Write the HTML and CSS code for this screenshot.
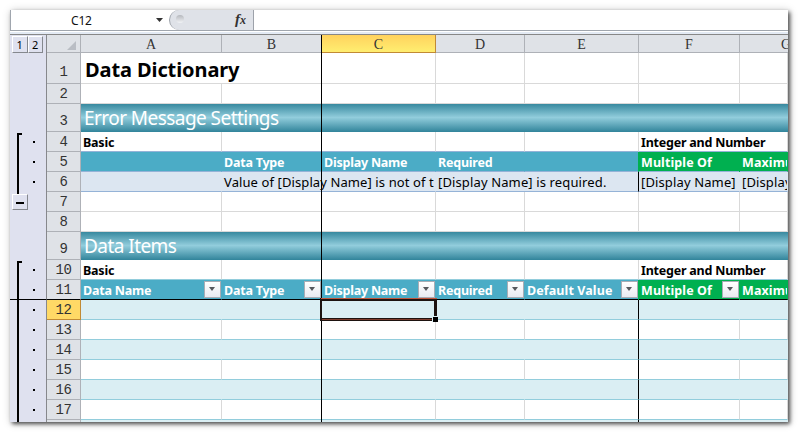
FILE: index.html
```html
<!DOCTYPE html>
<html lang="en">
<head>
<meta charset="utf-8">
<title>Data Dictionary</title>
<link rel="stylesheet" href="styles.css">
</head>
<body>
<main class="window">
  <div class="formula-bar">
    <div class="name-box"><span>C12</span>
      <svg width="7" height="4" viewBox="0 0 7 4"><path d="M0 0h7L3.5 4z" fill="#333"/></svg>
    </div>
    <div class="fx"><i class="knob"></i><span>f<small>x</small></span></div>
    <div class="formula"></div>
  </div>
  <div class="bar-gap"></div>
  <div class="sheet">
    <div class="row head">
      <div class="outline levels"><b>1</b><b>2</b></div>
      <div class="corner"><svg width="9" height="9" viewBox="0 0 9 9"><path d="M9 0v9H0z" fill="#b9bdc4"/></svg></div>
      <div>A</div><div>B</div><div class="active">C</div><div>D</div><div>E</div><div>F</div><div class="partial">G</div>
    </div>
    <div class="row tall">
      <div class="outline"></div><div class="num">1</div>
      <div class="cell span2 title">Data Dictionary</div><div class="cell"></div><div class="cell"></div><div class="cell"></div><div class="cell"></div><div class="cell"></div>
    </div>
    <div class="row">
      <div class="outline"></div><div class="num">2</div>
      <div class="cell"></div><div class="cell"></div><div class="cell"></div><div class="cell"></div><div class="cell"></div><div class="cell"></div><div class="cell"></div>
    </div>
    <div class="row band-row">
      <div class="outline"></div><div class="num">3</div><div class="band">Error Message Settings</div>
    </div>
    <div class="row strong blue-line">
      <div class="outline"><i class="bracket start"></i><i class="dot"></i></div><div class="num">4</div>
      <div class="cell">Basic</div><div class="cell"></div><div class="cell"></div><div class="cell"></div><div class="cell"></div><div class="cell span2">Integer and Number</div>
    </div>
    <div class="row strong fields blue-line">
      <div class="outline"><i class="bracket"></i><i class="dot"></i></div><div class="num">5</div>
      <div class="cell"></div><div class="cell">Data Type</div><div class="cell">Display Name</div><div class="cell">Required</div><div class="cell"></div><div class="cell green">Multiple Of</div><div class="cell green">Maximum</div>
    </div>
    <div class="row messages blue-line">
      <div class="outline"><i class="bracket"></i><i class="dot"></i></div><div class="num">6</div>
      <div class="cell"></div><div class="cell span2 tight">Value of [Display Name] is not of t</div><div class="cell span2 edge">[Display Name] is required.</div><div class="cell">[Display Name]</div><div class="cell">[Display Name]</div>
    </div>
    <div class="row">
      <div class="outline"><i class="bracket end"></i><i class="collapse"></i></div><div class="num">7</div>
      <div class="cell"></div><div class="cell"></div><div class="cell"></div><div class="cell"></div><div class="cell"></div><div class="cell"></div><div class="cell"></div>
    </div>
    <div class="row">
      <div class="outline"></div><div class="num">8</div>
      <div class="cell"></div><div class="cell"></div><div class="cell"></div><div class="cell"></div><div class="cell"></div><div class="cell"></div><div class="cell"></div>
    </div>
    <div class="row band-row">
      <div class="outline"></div><div class="num">9</div><div class="band">Data Items</div>
    </div>
    <div class="row strong aqua-line">
      <div class="outline"><i class="bracket start"></i><i class="dot"></i></div><div class="num">10</div>
      <div class="cell">Basic</div><div class="cell"></div><div class="cell"></div><div class="cell"></div><div class="cell"></div><div class="cell span2">Integer and Number</div>
    </div>
    <div class="row strong fields frozen">
      <div class="outline"><i class="bracket"></i><i class="dot"></i></div><div class="num">11</div>
      <div class="cell">Data Name<i class="filter"></i></div><div class="cell">Data Type<i class="filter"></i></div><div class="cell">Display Name<i class="filter"></i></div><div class="cell">Required<i class="filter"></i></div><div class="cell loose">Default Value<i class="filter"></i></div><div class="cell green">Multiple Of<i class="filter"></i></div><div class="cell green">Maximum</div>
    </div>
    <div class="row data shade aqua-line">
      <div class="outline"><i class="bracket"></i><i class="dot"></i></div><div class="num active">12</div>
      <div class="cell"></div><div class="cell"></div><div class="cell"></div><div class="cell"></div><div class="cell edge"></div><div class="cell"></div><div class="cell"></div>
    </div>
    <div class="row data aqua-line">
      <div class="outline"><i class="bracket"></i><i class="dot"></i></div><div class="num">13</div>
      <div class="cell"></div><div class="cell"></div><div class="cell"></div><div class="cell"></div><div class="cell edge"></div><div class="cell"></div><div class="cell"></div>
    </div>
    <div class="row data shade aqua-line">
      <div class="outline"><i class="bracket"></i><i class="dot"></i></div><div class="num">14</div>
      <div class="cell"></div><div class="cell"></div><div class="cell"></div><div class="cell"></div><div class="cell edge"></div><div class="cell"></div><div class="cell"></div>
    </div>
    <div class="row data aqua-line">
      <div class="outline"><i class="bracket"></i><i class="dot"></i></div><div class="num">15</div>
      <div class="cell"></div><div class="cell"></div><div class="cell"></div><div class="cell"></div><div class="cell edge"></div><div class="cell"></div><div class="cell"></div>
    </div>
    <div class="row data shade aqua-line">
      <div class="outline"><i class="bracket"></i><i class="dot"></i></div><div class="num">16</div>
      <div class="cell"></div><div class="cell"></div><div class="cell"></div><div class="cell"></div><div class="cell edge"></div><div class="cell"></div><div class="cell"></div>
    </div>
    <div class="row data aqua-line">
      <div class="outline"><i class="bracket"></i><i class="dot"></i></div><div class="num">17</div>
      <div class="cell"></div><div class="cell"></div><div class="cell"></div><div class="cell"></div><div class="cell edge"></div><div class="cell"></div><div class="cell"></div>
    </div>
    <div class="row data shade">
      <div class="outline"><i class="bracket"></i></div><div class="num"></div>
      <div class="cell"></div><div class="cell"></div><div class="cell"></div><div class="cell"></div><div class="cell edge"></div><div class="cell"></div><div class="cell"></div>
    </div>
    <i class="freeze-line"></i>
    <div class="selection"><i class="handle"></i></div>
  </div>
</main>
</body>
</html>
```
FILE: styles.css
```css
* { box-sizing: border-box; }
body {
  margin: 0;
  padding: 10px;
  background: #fff;
  overflow: hidden;
  font-family: "Noto Sans", sans-serif;
}
.window {
  width: 778px;
  height: 412px;
  display: flex;
  flex-direction: column;
  background: #fff;
  box-shadow: 2px 2px 4px rgba(0, 0, 0, .65), 1px 1px 9px rgba(0, 0, 0, .2);
}

/* Formula bar */
.formula-bar {
  display: flex;
  flex: none;
  height: 21px;
  border: solid #a0a6ae;
  border-width: 0 0 1px 1px;
}
.name-box {
  width: 158px;
  display: flex;
  align-items: center;
  justify-content: space-between;
  padding: 0 6px 0 60px;
  font-size: 12px;
  letter-spacing: -.2px;
  color: #111;
}
.fx {
  display: flex;
  align-items: center;
  justify-content: space-between;
  width: 85px;
  padding: 0 7px 2px 6px;
  background: #dfe2e8;
  border-left: 1px solid #9da2aa;
  border-right: 1px solid #9da2aa;
  border-radius: 10px 0 0 10px;
  font: italic bold 15px/18px "Liberation Serif", serif;
  color: #333;
}
.fx small { font-size: 12px; }
.knob {
  width: 8px;
  height: 8px;
  border-radius: 50%;
  background: linear-gradient(#b5b8bd, #f1f3f6);
}
.bar-gap {
  flex: none;
  height: 4px;
  background: #e3eaf4;
  border-top: 1px solid #fff;
  border-bottom: 1px solid #878787;
}

/* Grid */
.sheet {
  position: relative;
  flex: 1;
  overflow: hidden;
}
.row {
  display: grid;
  grid-template-columns: 37px 34px 141px 100px 114px 89px 114px 101px 48px;
  grid-template-rows: 100%;
  height: 20px;
}
.row.tall { height: 31px; }
.row.band-row { height: 28px; }
.row.head {
  height: 18px;
  font: 14px/20px "Liberation Serif", serif;
  color: #333;
  text-align: center;
}
.head > div:not(.outline) {
  background: #dfe2e7;
  border: solid #aeb1b7;
  border-width: 0 1px 1px 0;
  overflow: hidden;
}
.head > div.active {
  background: linear-gradient(#ffd25e, #ffee70);
  border-color: #c18a35;
}
.head > .partial:not(.outline) { text-align: left; padding-left: 41px; border-right: 0; }
.head > .corner:not(.outline) { text-align: right; padding: 6px 4px 0 0; line-height: 0; }

.outline {
  display: flex;
  background: #dfe1ef;
  border-right: 1px solid #87888c;
}
.levels { padding: 1px 3px 0 2px; }
.levels b {
  flex: 1;
  border: 1px solid #fff;
  border-right-color: #85888e;
  border-bottom-color: #85888e;
  font: 11px/15px "Noto Sans", sans-serif;
  color: #000;
}
.bracket {
  flex: none;
  width: 5px;
  margin-left: 7px;
  border-left: 2px solid #000;
}
.bracket.start { border-top: 2px solid #000; margin-top: 1px; }
.bracket.end { height: 2px; }
.dot {
  width: 2px;
  height: 2px;
  margin: 9px 0 0 11px;
  background: #000;
}
.collapse {
  flex: none;
  width: 16px;
  height: 16px;
  margin: 2px 0 0 -10px;
  border: 1px solid #fff;
  border-right-color: #85888e;
  border-bottom-color: #85888e;
  background: linear-gradient(#000, #000) 3px 7px / 8px 2px no-repeat #dfe1ef;
}
.num {
  background: #dfe2e7;
  border: solid #aeb1b7;
  border-width: 0 1px 1px 0;
  font: 14px/21px "Liberation Mono", monospace;
  letter-spacing: -.4px;
  text-align: center;
  color: #333;
  overflow: hidden;
}
.tall .num { line-height: 39px; }
.band-row .num { line-height: 34px; }
.num.active { background: #ffd966; border-color: #c18a35; }

.cell {
  position: relative;
  border: solid #d9d9d9;
  border-width: 0 1px 1px 0;
  padding-left: 2px;
  white-space: nowrap;
  overflow: hidden;
  font-size: 13px;
  line-height: 20px;
  color: #000;
}
.span2 { grid-column: span 2; }
.title {
  padding-left: 4px;
  font-size: 20px;
  line-height: 33px;
  font-weight: bold;
  letter-spacing: -.1px;
}
.strong .cell { font-size: 12.5px; font-weight: bold; letter-spacing: -.22px; line-height: 21px; }
.strong .cell.green { letter-spacing: .1px; }
.strong .cell.loose { letter-spacing: .1px; }
.band {
  grid-column: 3 / -1;
  height: 29px;
  margin-top: -1px;
  padding-left: 3px;
  background: linear-gradient(#31849b, #92cddc 50%, #31849b);
  font-size: 19px;
  line-height: 31px;
  letter-spacing: -.55px;
  color: #fff;
}
.blue-line .cell { border-bottom-color: #95b3d7; }
.aqua-line .cell { border-bottom-color: #92cddc; }
.fields .cell { background: #4bacc6; border-right-color: #4bacc6; color: #fff; }
.fields .cell.green { background: #00b050; border-right-color: #00b050; box-shadow: -1px 0 #00b050; }
.messages .cell { background: #dce6f1; border-right-color: #dce6f1; letter-spacing: .13px; }
.messages .cell.tight { letter-spacing: .1px; }
.messages .cell.edge { border-right-color: #000; }
.frozen .cell, .frozen .outline, .frozen .num { border-bottom: 1px solid #000; }
.shade .cell { background: #daeef3; border-right-color: #daeef3; }
.data .cell.edge { border-right-color: #000; }
.filter {
  position: absolute;
  right: 0;
  top: 1px;
  width: 17px;
  height: 17px;
  border: 1px solid #a9adb5;
  background: linear-gradient(#fff, #e9ebf1);
}
.filter::after {
  content: "";
  position: absolute;
  left: 4px;
  top: 5px;
  border: solid transparent;
  border-width: 4px 3.5px 0;
  border-top-color: #55585d;
}

/* Overlays */
.freeze-line {
  position: absolute;
  left: 311px;
  top: 0;
  width: 1px;
  height: 100%;
  background: #000;
}
.selection {
  position: absolute;
  left: 310px;
  top: 263px;
  width: 117px;
  height: 23px;
  border: solid #1d1310;
  border-width: 3px 3px 3px 2px;
}
.selection::before, .selection::after {
  content: "";
  position: absolute;
  left: 0;
  right: 0;
  height: 1px;
}
.selection::before { top: -3px; left: -1px; right: -3px; background: #c0563c; }
.selection::after { bottom: -2px; background: #813c2c; }
.handle {
  position: absolute;
  z-index: 1;
  right: -4px;
  bottom: -4px;
  width: 6px;
  height: 6px;
  border: 1px solid #daeef3;
  border-right: 0;
  border-bottom: 0;
  background: #000;
}
```
